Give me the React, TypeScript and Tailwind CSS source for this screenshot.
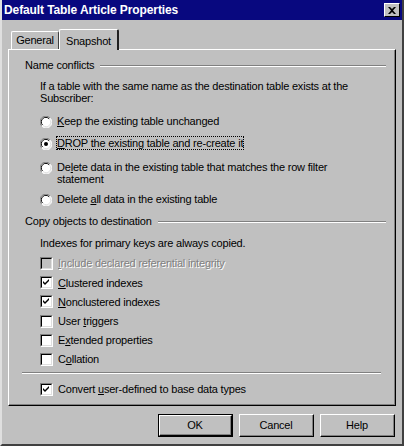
import React from 'react';

const font = { fontFamily: '"Liberation Sans", Arial, sans-serif' };

function Radio({ checked }: { checked?: boolean }) {
    return (
        <svg width="12" height="12" viewBox="0 0 12 12" className="shrink-0">
            <circle cx="6" cy="6" r="5.5" fill="#fff" />
            <path d="M10 2 A5.5 5.5 0 0 0 1.5 9.8" fill="none" stroke="#808080" strokeWidth="1" />
            <path d="M9.2 2.8 A4.5 4.5 0 0 0 2.5 9" fill="none" stroke="#000" strokeWidth="1" />
            <path d="M10.3 2.3 A5.5 5.5 0 0 1 2 10.3" fill="none" stroke="#fff" strokeWidth="1" />
            <path d="M9.4 3 A4.5 4.5 0 0 1 3 9.4" fill="none" stroke="#dfdfdf" strokeWidth="1" />
            {checked && <circle cx="6" cy="6" r="2" fill="#000" />}
        </svg>
    );
}

function Check({ checked, disabled }: { checked?: boolean; disabled?: boolean }) {
    return (
        <span
            className={`relative block w-[13px] h-[13px] shrink-0 border-t border-l border-t-[#808080] border-l-[#808080] border-b border-r border-b-white border-r-white ${disabled ? 'bg-[#c0c0c0]' : 'bg-white'}`}
        >
            <span className="absolute inset-0 border-t border-l border-t-black border-l-black border-b border-r border-b-[#dfdfdf] border-r-[#dfdfdf]" />
            {checked && (
                <svg width="7" height="7" viewBox="0 0 7 7" className="absolute left-[2px] top-[2px]">
                    <path d="M0 2 L2 4 L6 0 L6 2 L2 6 L0 4 Z" fill="#000" />
                </svg>
            )}
        </span>
    );
}

function RadioRow({ children, checked, focus }: { children: React.ReactNode; checked?: boolean; focus?: boolean }) {
    return (
        <div className="flex items-start gap-[5px] pl-[31px]">
            <div className="pt-[1px]">
                <Radio checked={checked} />
            </div>
            <div className={`leading-[12px] ${focus ? 'outline outline-1 outline-dotted outline-black' : ''}`}>{children}</div>
        </div>
    );
}

function CheckRow({ children, checked, disabled }: { children: React.ReactNode; checked?: boolean; disabled?: boolean }) {
    return (
        <div className="flex items-center h-[19.2px] gap-[5px] pl-[31px]">
            <Check checked={checked} disabled={disabled} />
            <span className={disabled ? 'text-[#808080] [text-shadow:1px_1px_0_#fff]' : ''}>{children}</span>
        </div>
    );
}

function GroupLabel({ children }: { children: React.ReactNode }) {
    return (
        <div className="flex items-center h-[13px] pl-[16px] pr-[8px]">
            <span className="pr-[6px]">{children}</span>
            <div className="flex-1 flex flex-col">
                <div className="h-px bg-[#808080]" />
                <div className="h-px bg-white" />
            </div>
        </div>
    );
}

function Button({ children, isDefault }: { children: React.ReactNode; isDefault?: boolean }) {
    return (
        <div className={`w-[75px] h-[23px] ${isDefault ? 'border border-black' : ''}`}>
            <div className="w-full h-full border-t border-l border-white border-b border-r border-b-black border-r-black">
                <div className="w-full h-full flex items-center justify-center border-b border-r border-b-[#808080] border-r-[#808080]">
                    {children}
                </div>
            </div>
        </div>
    );
}

export default function App() {
    return (
        <div
            className="w-[404px] h-[446px] bg-[#c0c0c0] text-black text-[11px] tracking-[-0.2px] flex flex-col border-l-2 border-l-[#dfdfdf] border-r-2 border-r-[#404040] border-b-2 border-b-[#404040]"
            style={font}
        >
            {/* Title bar */}
            <div className="h-[20px] bg-[#08087f] flex items-center justify-between pl-[2px] pr-[2px]">
                <span className="text-white font-bold text-[12px] tracking-[-0.1px]">Default Table Article Properties</span>
                <div className="w-[16px] h-[14px] bg-[#c0c0c0] border-t border-l border-white border-b border-r border-b-black border-r-black flex items-center justify-center">
                    <svg width="8" height="7" viewBox="0 0 8 7">
                        <path d="M0 0 L2 0 L4 2 L6 0 L8 0 L5 3.5 L8 7 L6 7 L4 5 L2 7 L0 7 L3 3.5 Z" fill="#000" />
                    </svg>
                </div>
            </div>

            {/* Tabs */}
            <div className="flex items-end h-[29px] pl-[9px]">
                <div className="h-[18px] w-[48px] flex items-center justify-center border-t border-l border-white border-r border-r-[#404040] rounded-tl-[2px] rounded-tr-[2px]">
                    General
                </div>
                <div className="h-[21px] w-[60px] -mb-px relative z-10 bg-[#c0c0c0] flex items-start pt-[3px] justify-center border-t border-l border-white border-r-2 border-r-[#202020] rounded-tl-[2px] rounded-tr-[2px]">
                    Snapshot
                </div>
            </div>

            {/* Panel */}
            <div className="mx-[6px] h-[357px] border-t border-l border-white border-b border-r border-b-black border-r-black">
                <div className="h-full border-b border-r border-b-[#808080] border-r-[#808080]">
                    <div className="h-[9px]" />
                    <GroupLabel>Name conflicts</GroupLabel>
                    <div className="mt-[8px] pl-[31px] leading-[12px]">
                        If a table with the same name as the destination table exists at the
                        <br />
                        Subscriber:
                    </div>
                    <div className="mt-[11px]">
                        <RadioRow>
                            <u>K</u>eep the existing table unchanged
                        </RadioRow>
                    </div>
                    <div className="mt-[9px]">
                        <RadioRow checked focus>
                            <u>D</u>ROP the existing table and re-create it
                        </RadioRow>
                    </div>
                    <div className="mt-[11px]">
                        <RadioRow>
                            De<u>l</u>ete data in the existing table that matches the row filter
                            <br />
                            statement
                        </RadioRow>
                    </div>
                    <div className="mt-[8px]">
                        <RadioRow>
                            Delete <u>a</u>ll data in the existing table
                        </RadioRow>
                    </div>
                    <div className="mt-[9px]">
                        <GroupLabel>Copy objects to destination</GroupLabel>
                    </div>
                    <div className="mt-[9px] pl-[31px] leading-[13px]">Indexes for primary keys are always copied.</div>
                    <div className="mt-[4px]">
                        <CheckRow disabled>
                            <u>I</u>nclude declared referential integrity
                        </CheckRow>
                        <CheckRow checked>
                            <u>C</u>lustered indexes
                        </CheckRow>
                        <CheckRow checked>
                            <u>N</u>onclustered indexes
                        </CheckRow>
                        <CheckRow>
                            User <u>t</u>riggers
                        </CheckRow>
                        <CheckRow>
                            E<u>x</u>tended properties
                        </CheckRow>
                        <CheckRow>
                            C<u>o</u>llation
                        </CheckRow>
                    </div>
                    <div className="mt-[3px] mx-[13px] flex flex-col">
                        <div className="h-px bg-[#808080]" />
                        <div className="h-px bg-white" />
                    </div>
                    <div className="mt-[6px]">
                        <CheckRow checked>
                            Convert <u>u</u>ser-defined to base data types
                        </CheckRow>
                    </div>
                </div>
            </div>

            {/* Buttons */}
            <div className="flex justify-end gap-[6px] pr-[7px] mt-[8px]">
                <Button isDefault>OK</Button>
                <Button>Cancel</Button>
                <Button>Help</Button>
            </div>
        </div>
    );
}
